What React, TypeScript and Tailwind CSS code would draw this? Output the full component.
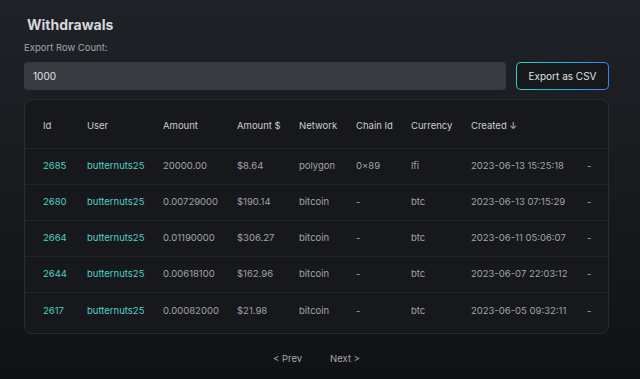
import React from 'react';

type Row = {
  id: string;
  user: string;
  amount: string;
  usd: string;
  network: string;
  chain: string;
  currency: string;
  created: string;
};

const rows: Row[] = [
  { id: '2685', user: 'butternuts25', amount: '20000.00', usd: '$8.64', network: 'polygon', chain: '0×89', currency: 'lfi', created: '2023-06-13 15:25:18' },
  { id: '2680', user: 'butternuts25', amount: '0.00729000', usd: '$190.14', network: 'bitcoin', chain: '-', currency: 'btc', created: '2023-06-13 07:15:29' },
  { id: '2664', user: 'butternuts25', amount: '0.01190000', usd: '$306.27', network: 'bitcoin', chain: '-', currency: 'btc', created: '2023-06-11 05:06:07' },
  { id: '2644', user: 'butternuts25', amount: '0.00618100', usd: '$162.96', network: 'bitcoin', chain: '-', currency: 'btc', created: '2023-06-07 22:03:12' },
  { id: '2617', user: 'butternuts25', amount: '0.00082000', usd: '$21.98', network: 'bitcoin', chain: '-', currency: 'btc', created: '2023-06-05 09:32:11' },
];

const cols = 'grid grid-cols-[44px_76px_74px_62px_57px_55px_60px_116px_1fr] items-center pl-[18px]';

const App: React.FC = () => {
  return (
    <div className="min-h-[379px] w-full bg-gradient-to-b from-[#1f2227] to-[#111215] font-['Inter',sans-serif] pl-6 pr-[31px] pt-[15px]">
      <h1 className="pl-[3px] text-[14px] font-bold leading-5 text-[#d4d7dc]">Withdrawals</h1>
      <div className="mt-[5px] text-[9.5px] leading-4 text-[#a3a7ad]">Export Row Count:</div>

      <div className="mt-[6px] flex gap-[10px]">
        <div className="flex h-[28px] flex-1 items-center rounded-[4px] bg-[#373a3f] pl-[9px] text-[10px] text-[#e2e4e8]">1000</div>
        <div className="rounded-[5px] bg-gradient-to-r from-[#2dd4bf] to-[#3b82f6] p-px">
          <button className="flex h-[26px] w-[91px] items-center justify-center rounded-[4px] bg-[#16181c] text-[10px] text-[#dfe2e6]">
            Export as CSV
          </button>
        </div>
      </div>

      <div className="mt-[9px] rounded-[8px] border border-[#2a2c31] bg-[#17181c] pb-[4px]">
        <div className={`${cols} h-[49px] border-b border-[#232529] pt-[5px] text-[9.5px] text-[#c9ccd1]`}>
          <span>Id</span>
          <span>User</span>
          <span>Amount</span>
          <span>Amount $</span>
          <span>Network</span>
          <span>Chain Id</span>
          <span>Currency</span>
          <span>Created ↓</span>
          <span></span>
        </div>
        {rows.map((r, i) => (
          <div
            key={r.id}
            className={`${cols} h-[36px] text-[9.5px] text-[#a0a4aa] ${i < rows.length - 1 ? 'border-b border-[#222428]' : ''}`}
          >
            <span className="text-[#4fd1c5]">{r.id}</span>
            <span className="text-[#4fd1c5]">{r.user}</span>
            <span>{r.amount}</span>
            <span>{r.usd}</span>
            <span>{r.network}</span>
            <span>{r.chain}</span>
            <span>{r.currency}</span>
            <span>{r.created}</span>
            <span>-</span>
          </div>
        ))}
      </div>

      <div className="mt-[18px] flex justify-center gap-[28px] pb-[10px] text-[9.5px] text-[#a3a7ad]">
        <span>&lt; Prev</span>
        <span>Next &gt;</span>
      </div>
    </div>
  );
};

export default App;
